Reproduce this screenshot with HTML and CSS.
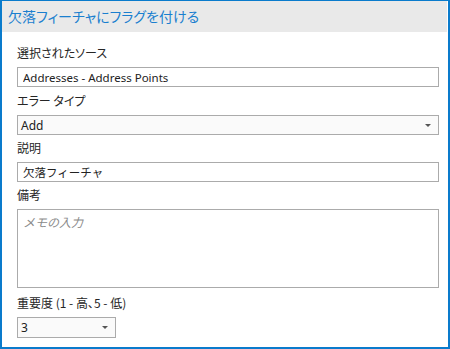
FILE: index.html
```html
<!DOCTYPE html>
<html lang="ja">
<head>
  <meta charset="UTF-8" />
  <title>欠落フィーチャにフラグを付ける</title>
  <link rel="stylesheet" href="styles.css">
</head>
<body>

  <div class="panel">
    <div class="header">欠落フィーチャにフラグを付ける</div>

    <div class="form">
      <label class="label">選択されたソース</label>
      <input class="field" type="text" value="Addresses - Address Points" readonly>

      <label class="label">エラー タイプ</label>
      <div class="dropdown wide">
        <span>Add</span>
        <span class="arrow"></span>
      </div>

      <label class="label tight">説明</label>
      <input class="field" type="text" value="欠落フィーチャ">

      <label class="label tight">備考</label>
      <textarea class="notes" placeholder="メモの入力"></textarea>

      <label class="label loose">重要度 (1 - 高、5 - 低)</label>
      <div class="dropdown small">
        <span>3</span>
        <span class="arrow"></span>
      </div>
    </div>
  </div>

</body>
</html>
```

FILE: styles.css
```css
body {
  margin: 0;
  font-family: "Noto Sans", "Noto Sans CJK JP", sans-serif;
  background: #ffffff;
  color: #222;
}

.panel {
  width: 450px;
  height: 349px;
  box-sizing: border-box;
  border: 2px solid #0a7bcc;
  border-top-width: 1px;
  display: flex;
  flex-direction: column;
}

.header {
  height: 31px;
  margin-right: 1px;
  background: #e9e9e9;
  color: #1a7fcf;
  font-family: "Noto Sans CJK JP", sans-serif;
  font-feature-settings: "palt";
  font-size: 14px;
  line-height: 31px;
  padding-left: 6px;
}

.form {
  display: flex;
  flex-direction: column;
  padding: 7px 9px 0 15px;
}

.label {
  font-family: "Noto Sans CJK JP", sans-serif;
  font-feature-settings: "palt";
  font-size: 12px;
  line-height: 16px;
  padding: 6px 0;
  color: #262626;
}

.label.tight {
  padding: 5px 0 6px;
}

.label.loose {
  padding: 7px 0 6px;
}

.field {
  height: 20px;
  box-sizing: border-box;
  border: 1px solid #ababab;
  padding: 0 5px;
  margin: 0;
  font-family: "Noto Sans", "Noto Sans CJK JP", sans-serif;
  font-size: 11.5px;
  color: #222;
  outline: none;
}

.dropdown {
  height: 20px;
  box-sizing: border-box;
  border: 1px solid #ababab;
  background: #fafafa;
  display: flex;
  justify-content: space-between;
  align-items: center;
  padding: 0 7px 0 3px;
  font-size: 12px;
}

.dropdown.small {
  width: 99px;
  height: 21px;
}

.arrow {
  width: 0;
  height: 0;
  border-left: 3px solid transparent;
  border-right: 3px solid transparent;
  border-top: 3px solid #555;
}

.notes {
  height: 79px;
  box-sizing: border-box;
  border: 1px solid #ababab;
  margin: 0;
  padding: 3px 5px;
  resize: none;
  font-family: "Noto Sans CJK JP", sans-serif;
  font-size: 12px;
  outline: none;
}

.notes::placeholder {
  color: #8a8a8a;
  font-style: italic;
}
```
